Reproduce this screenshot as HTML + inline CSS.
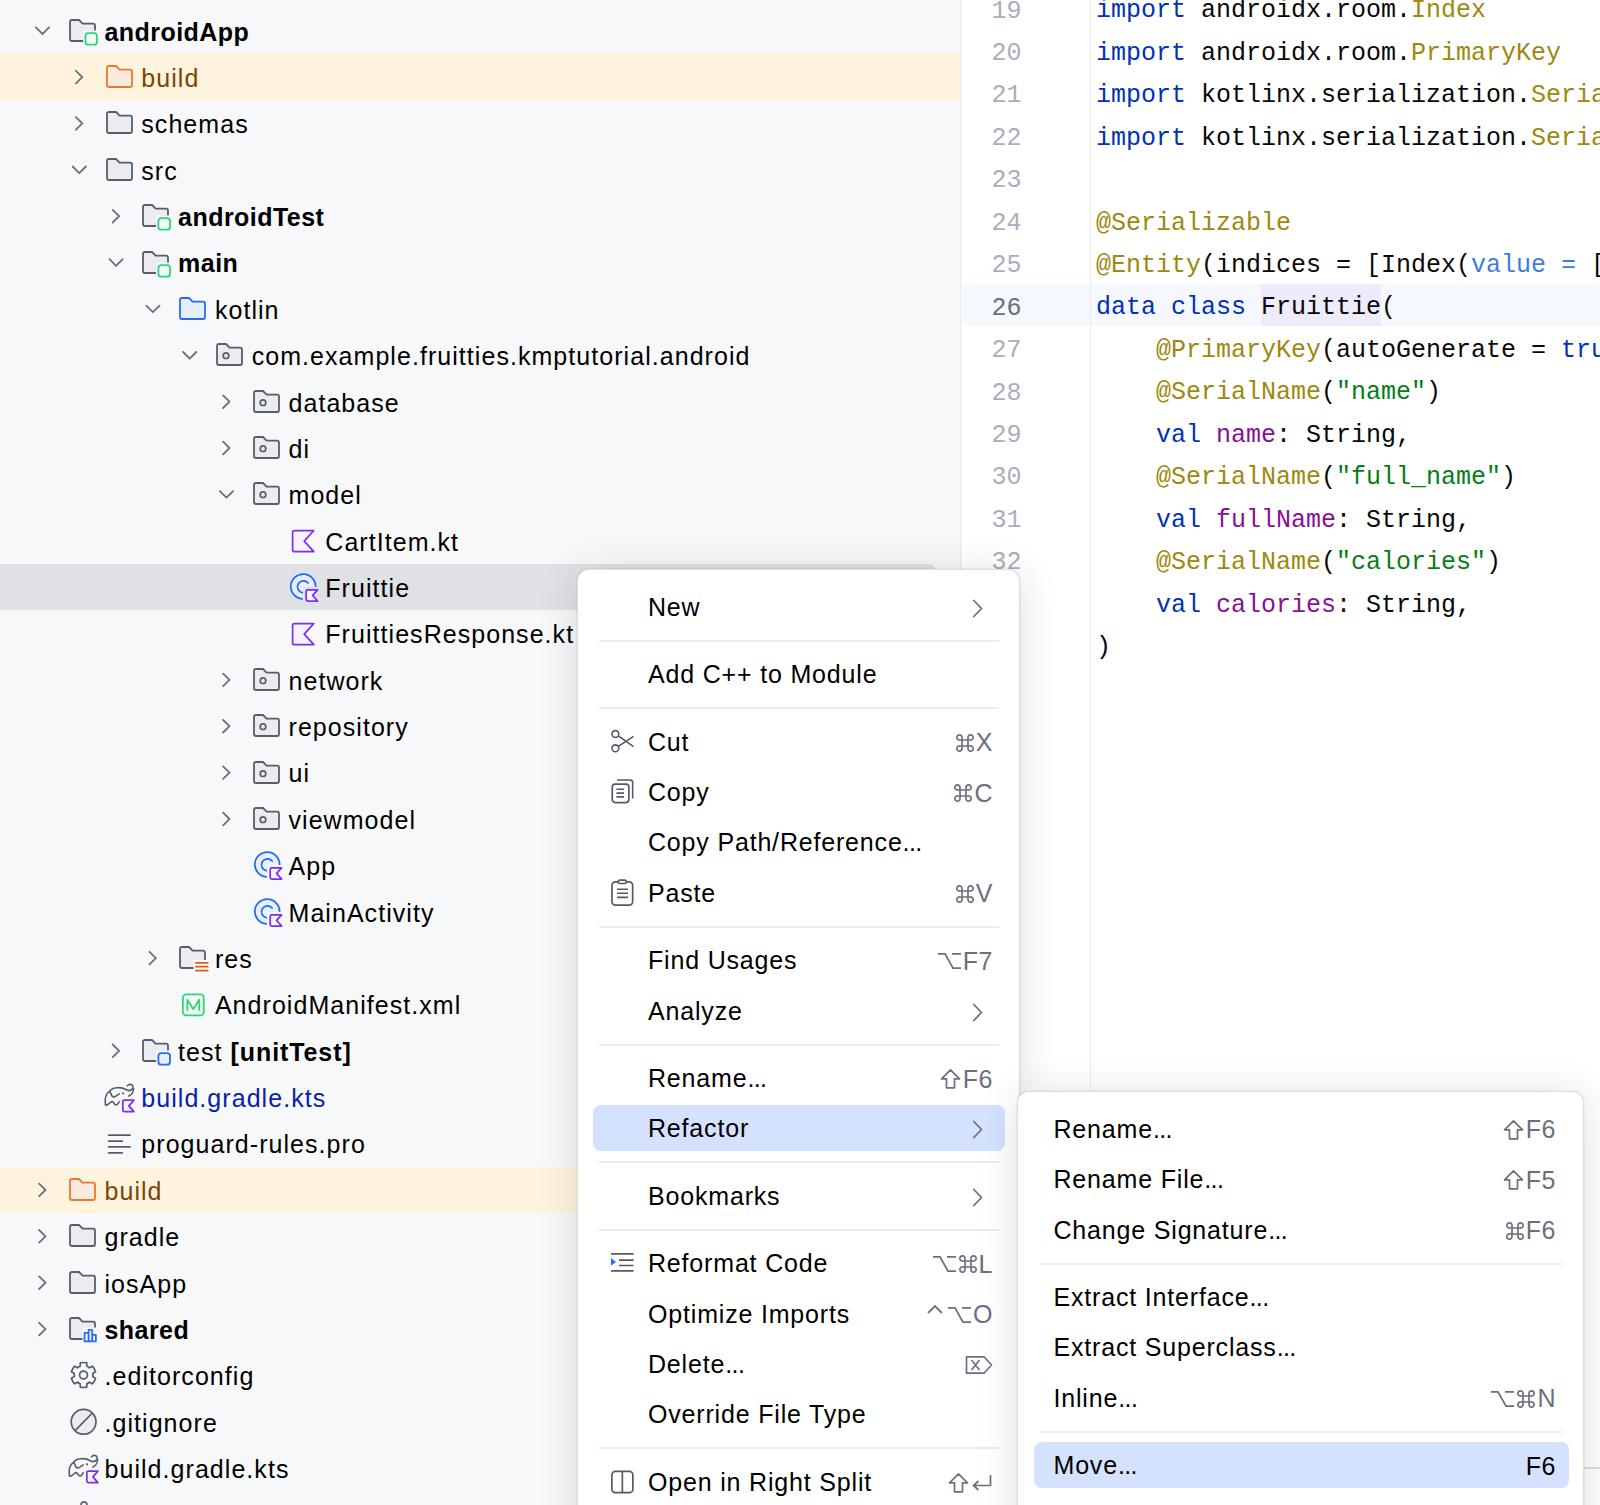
<!DOCTYPE html>
<html><head><meta charset="utf-8"><style>
*{margin:0;padding:0;box-sizing:border-box}
html,body{width:1600px;height:1505px;overflow:hidden;background:#F7F8FA}
body{position:relative;font-family:"Liberation Sans",sans-serif;font-size:25px;color:#000}
.ic{position:absolute;overflow:visible}
.rowbg{position:absolute;left:0;width:961px}
.sel{background:#DFE1E5;width:936px;border-radius:0 8px 8px 0}
.t{position:absolute;height:46.4px;line-height:46.4px;white-space:pre;letter-spacing:1.05px;margin-top:1px}
.t b{font-weight:bold;letter-spacing:0.9px}
.b{font-weight:bold;letter-spacing:0.45px}
.ex{color:#7F4305}
.bl{color:#0B22A6}
#tree{position:absolute;left:0;top:0;width:961px;height:1505px;background:#F7F8FA;border-right:1px solid #EBECF0;overflow:hidden}
#editor{position:absolute;left:962px;top:0;width:638px;height:1505px;background:#FFF;overflow:hidden}
.gsep{position:absolute;left:128px;top:0;width:1px;height:1505px;background:#EBECF0}
.curline{position:absolute;left:0;width:638px;background:#F5F8FE}
.ln{position:absolute;left:0;width:59.5px;margin-top:2.8px;text-align:right;font-family:"Liberation Mono",monospace;font-size:25px;height:42.5px;line-height:42.5px;color:#A9AEBD}
.ln.cur{color:#6A6E7D}
.code{position:absolute;left:134px;margin-top:2.5px;font-family:"Liberation Mono",monospace;font-size:25px;height:42.5px;line-height:42.5px;white-space:pre;color:#080808}
.hl{position:absolute;background:#EDEBFC}
.menu{position:absolute;background:#FFF;border:1px solid rgba(0,0,0,0.13);border-radius:12px;box-shadow:0 0 2px rgba(0,0,0,0.12),0 4px 40px rgba(0,0,0,0.13)}
.sep{position:absolute;height:2px;background:#EBECF0}
.dots{letter-spacing:-0.6px}
.msel{position:absolute;background:#D4E2FF;border-radius:8px}
.mt{position:absolute;white-space:pre;letter-spacing:0.82px}
.msc{position:absolute;display:flex;align-items:center;white-space:pre;letter-spacing:0.5px;padding-top:2px}
.msc svg{display:block}
</style></head>
<body>
<div id="tree">
<svg class="ic" style="left:66.7px;top:14.7px" width="32" height="32" viewBox="0 0 32 32"><defs><mask id="mk1" maskUnits="userSpaceOnUse" x="-4" y="-4" width="40" height="40"><rect x="-4" y="-4" width="40" height="40" fill="#fff"/><rect x="16" y="15.5" width="16" height="16" fill="#000"/></mask></defs><g mask="url(#mk1)"><path d="M3,24 V7 Q3,5 5,5 H12 L15.6,8.6 H26 Q28,8.6 28,10.6 V24 Q28,26 26,26 H5 Q3,26 3,24 Z" fill="#EBECF0" stroke="#585D6B" stroke-width="1.8" stroke-linejoin="round"/></g><rect x="18.4" y="18.1" width="11.6" height="11.6" rx="3" fill="#F2FCF3" stroke="#2ED47A" stroke-width="1.8"/></svg>
<div class="t b" style="left:104.5px;top:7.5px">androidApp</div>
<div class="rowbg" style="top:53.9px;height:46.4px;background:#FEF4DE"></div>
<svg class="ic" style="left:103.5px;top:61.1px" width="32" height="32" viewBox="0 0 32 32"><path d="M3,24 V7 Q3,5 5,5 H12 L15.6,8.6 H26 Q28,8.6 28,10.6 V24 Q28,26 26,26 H5 Q3,26 3,24 Z" fill="#FBEADF" stroke="#E8792A" stroke-width="1.8" stroke-linejoin="round"/></svg>
<div class="t ex" style="left:141.3px;top:53.9px">build</div>
<svg class="ic" style="left:103.5px;top:107.4px" width="32" height="32" viewBox="0 0 32 32"><path d="M3,24 V7 Q3,5 5,5 H12 L15.6,8.6 H26 Q28,8.6 28,10.6 V24 Q28,26 26,26 H5 Q3,26 3,24 Z" fill="#EBECF0" stroke="#585D6B" stroke-width="1.8" stroke-linejoin="round"/></svg>
<div class="t" style="left:141.3px;top:100.3px">schemas</div>
<svg class="ic" style="left:103.5px;top:153.8px" width="32" height="32" viewBox="0 0 32 32"><path d="M3,24 V7 Q3,5 5,5 H12 L15.6,8.6 H26 Q28,8.6 28,10.6 V24 Q28,26 26,26 H5 Q3,26 3,24 Z" fill="#EBECF0" stroke="#585D6B" stroke-width="1.8" stroke-linejoin="round"/></svg>
<div class="t" style="left:141.3px;top:146.6px">src</div>
<svg class="ic" style="left:140.3px;top:200.2px" width="32" height="32" viewBox="0 0 32 32"><defs><mask id="mk2" maskUnits="userSpaceOnUse" x="-4" y="-4" width="40" height="40"><rect x="-4" y="-4" width="40" height="40" fill="#fff"/><rect x="16" y="15.5" width="16" height="16" fill="#000"/></mask></defs><g mask="url(#mk2)"><path d="M3,24 V7 Q3,5 5,5 H12 L15.6,8.6 H26 Q28,8.6 28,10.6 V24 Q28,26 26,26 H5 Q3,26 3,24 Z" fill="#EBECF0" stroke="#585D6B" stroke-width="1.8" stroke-linejoin="round"/></g><rect x="18.4" y="18.1" width="11.6" height="11.6" rx="3" fill="#F2FCF3" stroke="#2ED47A" stroke-width="1.8"/></svg>
<div class="t b" style="left:178.1px;top:193.0px">androidTest</div>
<svg class="ic" style="left:140.3px;top:246.6px" width="32" height="32" viewBox="0 0 32 32"><defs><mask id="mk3" maskUnits="userSpaceOnUse" x="-4" y="-4" width="40" height="40"><rect x="-4" y="-4" width="40" height="40" fill="#fff"/><rect x="16" y="15.5" width="16" height="16" fill="#000"/></mask></defs><g mask="url(#mk3)"><path d="M3,24 V7 Q3,5 5,5 H12 L15.6,8.6 H26 Q28,8.6 28,10.6 V24 Q28,26 26,26 H5 Q3,26 3,24 Z" fill="#EBECF0" stroke="#585D6B" stroke-width="1.8" stroke-linejoin="round"/></g><rect x="18.4" y="18.1" width="11.6" height="11.6" rx="3" fill="#F2FCF3" stroke="#2ED47A" stroke-width="1.8"/></svg>
<div class="t b" style="left:178.1px;top:239.4px">main</div>
<svg class="ic" style="left:177.1px;top:292.9px" width="32" height="32" viewBox="0 0 32 32"><path d="M3,24 V7 Q3,5 5,5 H12 L15.6,8.6 H26 Q28,8.6 28,10.6 V24 Q28,26 26,26 H5 Q3,26 3,24 Z" fill="#E7EFFD" stroke="#2A6CF0" stroke-width="1.8" stroke-linejoin="round"/></svg>
<div class="t" style="left:214.9px;top:285.7px">kotlin</div>
<svg class="ic" style="left:213.9px;top:339.3px" width="32" height="32" viewBox="0 0 32 32"><path d="M3,24 V7 Q3,5 5,5 H12 L15.6,8.6 H26 Q28,8.6 28,10.6 V24 Q28,26 26,26 H5 Q3,26 3,24 Z" fill="#EBECF0" stroke="#585D6B" stroke-width="1.8" stroke-linejoin="round"/><circle cx="12.0" cy="16.7" r="2.8" fill="none" stroke="#585D6B" stroke-width="1.7"/></svg>
<div class="t" style="left:251.7px;top:332.1px">com.example.fruitties.kmptutorial.android</div>
<svg class="ic" style="left:250.7px;top:385.7px" width="32" height="32" viewBox="0 0 32 32"><path d="M3,24 V7 Q3,5 5,5 H12 L15.6,8.6 H26 Q28,8.6 28,10.6 V24 Q28,26 26,26 H5 Q3,26 3,24 Z" fill="#EBECF0" stroke="#585D6B" stroke-width="1.8" stroke-linejoin="round"/><circle cx="12.0" cy="16.7" r="2.8" fill="none" stroke="#585D6B" stroke-width="1.7"/></svg>
<div class="t" style="left:288.5px;top:378.5px">database</div>
<svg class="ic" style="left:250.7px;top:432.0px" width="32" height="32" viewBox="0 0 32 32"><path d="M3,24 V7 Q3,5 5,5 H12 L15.6,8.6 H26 Q28,8.6 28,10.6 V24 Q28,26 26,26 H5 Q3,26 3,24 Z" fill="#EBECF0" stroke="#585D6B" stroke-width="1.8" stroke-linejoin="round"/><circle cx="12.0" cy="16.7" r="2.8" fill="none" stroke="#585D6B" stroke-width="1.7"/></svg>
<div class="t" style="left:288.5px;top:424.8px">di</div>
<svg class="ic" style="left:250.7px;top:478.4px" width="32" height="32" viewBox="0 0 32 32"><path d="M3,24 V7 Q3,5 5,5 H12 L15.6,8.6 H26 Q28,8.6 28,10.6 V24 Q28,26 26,26 H5 Q3,26 3,24 Z" fill="#EBECF0" stroke="#585D6B" stroke-width="1.8" stroke-linejoin="round"/><circle cx="12.0" cy="16.7" r="2.8" fill="none" stroke="#585D6B" stroke-width="1.7"/></svg>
<div class="t" style="left:288.5px;top:471.2px">model</div>
<svg class="ic" style="left:288.3px;top:524.8px" width="32" height="32" viewBox="0 0 32 32"><path d="M6.6,5.55 H25.85 L16.2,16.1 L25.85,26.65 H6.6 Q4.6,26.65 4.6,24.65 V7.55 Q4.6,5.55 6.6,5.55 Z" fill="#F7F2FF" stroke="#7B30EE" stroke-width="1.7" stroke-linejoin="round"/></svg>
<div class="t" style="left:325.3px;top:517.6px">CartItem.kt</div>
<div class="rowbg sel" style="top:564.0px;height:46.4px"></div>
<svg class="ic" style="left:288.3px;top:571.1px" width="32" height="32" viewBox="0 0 32 32"><defs><mask id="mk4" maskUnits="userSpaceOnUse" x="-4" y="-4" width="40" height="40"><rect x="-4" y="-4" width="40" height="40" fill="#fff"/><rect x="15.5" y="16" width="17" height="16" fill="#000"/></mask></defs><g mask="url(#mk4)"><circle cx="15.2" cy="15.6" r="12.4" fill="#E7EFFD" stroke="none"/><path d="M27.6,15.6 A12.4,12.4 0 1 0 14.2,27.9" fill="none" stroke="#2A6CF0" stroke-width="1.8" stroke-linecap="round"/><path d="M20.1,12.0 A6,6 0 1 0 14.2,21.7" fill="none" stroke="#2A6CF0" stroke-width="1.8" stroke-linecap="round"/></g><path d="M19.7,18.9 H29.6 L24.6,24.4 L29.6,30 H19.7 Q18.2,30 18.2,28.5 V20.4 Q18.2,18.9 19.7,18.9 Z" fill="#F8F3FF" stroke="#7B30EE" stroke-width="1.75" stroke-linejoin="round"/></svg>
<div class="t" style="left:325.3px;top:564.0px">Fruittie</div>
<svg class="ic" style="left:288.3px;top:617.5px" width="32" height="32" viewBox="0 0 32 32"><path d="M6.6,5.55 H25.85 L16.2,16.1 L25.85,26.65 H6.6 Q4.6,26.65 4.6,24.65 V7.55 Q4.6,5.55 6.6,5.55 Z" fill="#F7F2FF" stroke="#7B30EE" stroke-width="1.7" stroke-linejoin="round"/></svg>
<div class="t" style="left:325.3px;top:610.3px">FruittiesResponse.kt</div>
<svg class="ic" style="left:250.7px;top:663.9px" width="32" height="32" viewBox="0 0 32 32"><path d="M3,24 V7 Q3,5 5,5 H12 L15.6,8.6 H26 Q28,8.6 28,10.6 V24 Q28,26 26,26 H5 Q3,26 3,24 Z" fill="#EBECF0" stroke="#585D6B" stroke-width="1.8" stroke-linejoin="round"/><circle cx="12.0" cy="16.7" r="2.8" fill="none" stroke="#585D6B" stroke-width="1.7"/></svg>
<div class="t" style="left:288.5px;top:656.7px">network</div>
<svg class="ic" style="left:250.7px;top:710.2px" width="32" height="32" viewBox="0 0 32 32"><path d="M3,24 V7 Q3,5 5,5 H12 L15.6,8.6 H26 Q28,8.6 28,10.6 V24 Q28,26 26,26 H5 Q3,26 3,24 Z" fill="#EBECF0" stroke="#585D6B" stroke-width="1.8" stroke-linejoin="round"/><circle cx="12.0" cy="16.7" r="2.8" fill="none" stroke="#585D6B" stroke-width="1.7"/></svg>
<div class="t" style="left:288.5px;top:703.1px">repository</div>
<svg class="ic" style="left:250.7px;top:756.6px" width="32" height="32" viewBox="0 0 32 32"><path d="M3,24 V7 Q3,5 5,5 H12 L15.6,8.6 H26 Q28,8.6 28,10.6 V24 Q28,26 26,26 H5 Q3,26 3,24 Z" fill="#EBECF0" stroke="#585D6B" stroke-width="1.8" stroke-linejoin="round"/><circle cx="12.0" cy="16.7" r="2.8" fill="none" stroke="#585D6B" stroke-width="1.7"/></svg>
<div class="t" style="left:288.5px;top:749.4px">ui</div>
<svg class="ic" style="left:250.7px;top:803.0px" width="32" height="32" viewBox="0 0 32 32"><path d="M3,24 V7 Q3,5 5,5 H12 L15.6,8.6 H26 Q28,8.6 28,10.6 V24 Q28,26 26,26 H5 Q3,26 3,24 Z" fill="#EBECF0" stroke="#585D6B" stroke-width="1.8" stroke-linejoin="round"/><circle cx="12.0" cy="16.7" r="2.8" fill="none" stroke="#585D6B" stroke-width="1.7"/></svg>
<div class="t" style="left:288.5px;top:795.8px">viewmodel</div>
<svg class="ic" style="left:251.5px;top:849.4px" width="32" height="32" viewBox="0 0 32 32"><defs><mask id="mk5" maskUnits="userSpaceOnUse" x="-4" y="-4" width="40" height="40"><rect x="-4" y="-4" width="40" height="40" fill="#fff"/><rect x="15.5" y="16" width="17" height="16" fill="#000"/></mask></defs><g mask="url(#mk5)"><circle cx="15.2" cy="15.6" r="12.4" fill="#E7EFFD" stroke="none"/><path d="M27.6,15.6 A12.4,12.4 0 1 0 14.2,27.9" fill="none" stroke="#2A6CF0" stroke-width="1.8" stroke-linecap="round"/><path d="M20.1,12.0 A6,6 0 1 0 14.2,21.7" fill="none" stroke="#2A6CF0" stroke-width="1.8" stroke-linecap="round"/></g><path d="M19.7,18.9 H29.6 L24.6,24.4 L29.6,30 H19.7 Q18.2,30 18.2,28.5 V20.4 Q18.2,18.9 19.7,18.9 Z" fill="#F8F3FF" stroke="#7B30EE" stroke-width="1.75" stroke-linejoin="round"/></svg>
<div class="t" style="left:288.5px;top:842.2px">App</div>
<svg class="ic" style="left:251.5px;top:895.7px" width="32" height="32" viewBox="0 0 32 32"><defs><mask id="mk6" maskUnits="userSpaceOnUse" x="-4" y="-4" width="40" height="40"><rect x="-4" y="-4" width="40" height="40" fill="#fff"/><rect x="15.5" y="16" width="17" height="16" fill="#000"/></mask></defs><g mask="url(#mk6)"><circle cx="15.2" cy="15.6" r="12.4" fill="#E7EFFD" stroke="none"/><path d="M27.6,15.6 A12.4,12.4 0 1 0 14.2,27.9" fill="none" stroke="#2A6CF0" stroke-width="1.8" stroke-linecap="round"/><path d="M20.1,12.0 A6,6 0 1 0 14.2,21.7" fill="none" stroke="#2A6CF0" stroke-width="1.8" stroke-linecap="round"/></g><path d="M19.7,18.9 H29.6 L24.6,24.4 L29.6,30 H19.7 Q18.2,30 18.2,28.5 V20.4 Q18.2,18.9 19.7,18.9 Z" fill="#F8F3FF" stroke="#7B30EE" stroke-width="1.75" stroke-linejoin="round"/></svg>
<div class="t" style="left:288.5px;top:888.5px">MainActivity</div>
<svg class="ic" style="left:177.1px;top:942.1px" width="32" height="32" viewBox="0 0 32 32"><defs><mask id="mk7" maskUnits="userSpaceOnUse" x="-4" y="-4" width="40" height="40"><rect x="-4" y="-4" width="40" height="40" fill="#fff"/><rect x="16.5" y="18" width="16" height="14" fill="#000"/></mask></defs><g mask="url(#mk7)"><path d="M3,24 V7 Q3,5 5,5 H12 L15.6,8.6 H26 Q28,8.6 28,10.6 V24 Q28,26 26,26 H5 Q3,26 3,24 Z" fill="#EBECF0" stroke="#585D6B" stroke-width="1.8" stroke-linejoin="round"/></g><path d="M18.85,20.8 H30.75 M18.85,24.7 H30.75 M18.85,28.7 H30.75" stroke="#E05A16" stroke-width="1.7" stroke-linecap="round" fill="none"/></svg>
<div class="t" style="left:214.9px;top:934.9px">res</div>
<svg class="ic" style="left:177.9px;top:988.5px" width="32" height="32" viewBox="0 0 32 32"><rect x="4.85" y="5.45" width="20.9" height="20.9" rx="3.5" fill="#F2FCF3" stroke="#2ED47A" stroke-width="1.8"/><path d="M9.35,21.8 V10.6 L15.3,20.2 L21.2,10.6 V21.8" fill="none" stroke="#2ED47A" stroke-width="1.7" stroke-linejoin="round"/></svg>
<div class="t" style="left:214.9px;top:981.3px">AndroidManifest.xml</div>
<svg class="ic" style="left:140.3px;top:1034.8px" width="32" height="32" viewBox="0 0 32 32"><defs><mask id="mk8" maskUnits="userSpaceOnUse" x="-4" y="-4" width="40" height="40"><rect x="-4" y="-4" width="40" height="40" fill="#fff"/><rect x="16" y="15.5" width="16" height="16" fill="#000"/></mask></defs><g mask="url(#mk8)"><path d="M3,24 V7 Q3,5 5,5 H12 L15.6,8.6 H26 Q28,8.6 28,10.6 V24 Q28,26 26,26 H5 Q3,26 3,24 Z" fill="#EBECF0" stroke="#585D6B" stroke-width="1.8" stroke-linejoin="round"/></g><rect x="18.4" y="18.1" width="11.6" height="11.6" rx="3" fill="#E7EFFD" stroke="#2A6CF0" stroke-width="1.8"/></svg>
<div class="t" style="left:178.1px;top:1027.7px">test <b>[unitTest]</b></div>
<svg class="ic" style="left:104.3px;top:1081.2px" width="32" height="32" viewBox="0 0 32 32"><defs><mask id="mk9" maskUnits="userSpaceOnUse" x="-4" y="-4" width="40" height="40"><rect x="-4" y="-4" width="40" height="40" fill="#fff"/><rect x="16.5" y="17" width="16" height="15" fill="#000"/></mask></defs><g mask="url(#mk9)"><path d="M6.0,9.9 C8.6,5.8 17.6,5.8 22.4,8.8 C26.6,11.1 29.6,7.6 29.0,5.2 C28.4,2.8 24.8,2.8 23.3,4.9 M29.6,7.6 C29.6,11.1 27.2,14.1 24.8,15.0 M6.0,9.9 C1.5,12.9 0.6,18.9 1.5,24.0 C3.9,24.9 5.1,21.9 7.5,20.7 C9.8,20.1 10.4,24.3 12.2,24.0 C14.0,23.7 14.6,21.9 15.2,20.7 M6.0,9.9 C6.9,13.5 8.1,16.5 10.4,15.9 C12.2,15.3 13.4,14.1 15.2,12.9" fill="none" stroke="#585D6B" stroke-width="1.6" stroke-linecap="round" stroke-linejoin="round"/><circle cx="19.1" cy="12.3" r="1.1" fill="#585D6B"/></g><path d="M20.3,19.2 H29.9 L24.9,24.9 L29.9,30.6 H20.3 Q18.8,30.6 18.8,29.1 V20.7 Q18.8,19.2 20.3,19.2 Z" fill="#F8F3FF" stroke="#7B30EE" stroke-width="1.75" stroke-linejoin="round"/></svg>
<div class="t bl" style="left:141.3px;top:1074.0px">build.gradle.kts</div>
<svg class="ic" style="left:104.3px;top:1127.6px" width="32" height="32" viewBox="0 0 32 32"><path d="M4.75,7.2 H26.05 M4.75,13.2 H18.25 M4.75,18.9 H26.05 M4.75,24.9 H18.25" stroke="#585D6B" stroke-width="1.7" stroke-linecap="round" fill="none"/></svg>
<div class="t" style="left:141.3px;top:1120.4px">proguard-rules.pro</div>
<div class="rowbg" style="top:1166.8px;height:46.4px;background:#FEF4DE"></div>
<svg class="ic" style="left:66.7px;top:1174.0px" width="32" height="32" viewBox="0 0 32 32"><path d="M3,24 V7 Q3,5 5,5 H12 L15.6,8.6 H26 Q28,8.6 28,10.6 V24 Q28,26 26,26 H5 Q3,26 3,24 Z" fill="#FBEADF" stroke="#E8792A" stroke-width="1.8" stroke-linejoin="round"/></svg>
<div class="t ex" style="left:104.5px;top:1166.8px">build</div>
<svg class="ic" style="left:66.7px;top:1220.3px" width="32" height="32" viewBox="0 0 32 32"><path d="M3,24 V7 Q3,5 5,5 H12 L15.6,8.6 H26 Q28,8.6 28,10.6 V24 Q28,26 26,26 H5 Q3,26 3,24 Z" fill="#EBECF0" stroke="#585D6B" stroke-width="1.8" stroke-linejoin="round"/></svg>
<div class="t" style="left:104.5px;top:1213.1px">gradle</div>
<svg class="ic" style="left:66.7px;top:1266.7px" width="32" height="32" viewBox="0 0 32 32"><path d="M3,24 V7 Q3,5 5,5 H12 L15.6,8.6 H26 Q28,8.6 28,10.6 V24 Q28,26 26,26 H5 Q3,26 3,24 Z" fill="#EBECF0" stroke="#585D6B" stroke-width="1.8" stroke-linejoin="round"/></svg>
<div class="t" style="left:104.5px;top:1259.5px">iosApp</div>
<svg class="ic" style="left:66.7px;top:1313.1px" width="32" height="32" viewBox="0 0 32 32"><defs><mask id="mk10" maskUnits="userSpaceOnUse" x="-4" y="-4" width="40" height="40"><rect x="-4" y="-4" width="40" height="40" fill="#fff"/><rect x="15.5" y="14.5" width="17" height="17.5" fill="#000"/></mask></defs><g mask="url(#mk10)"><path d="M3,24 V7 Q3,5 5,5 H12 L15.6,8.6 H26 Q28,8.6 28,10.6 V24 Q28,26 26,26 H5 Q3,26 3,24 Z" fill="#EBECF0" stroke="#585D6B" stroke-width="1.8" stroke-linejoin="round"/></g><path d="M17.5,28.3 V19.8 H21.6 V16.8 H25.2 V21.8 H28.9 V28.3 Z" fill="#E7EFFD" stroke="#2A6CF0" stroke-width="1.7" stroke-linejoin="round"/><path d="M21.6,19.8 V28.3 M25.2,21.8 V28.3" fill="none" stroke="#2A6CF0" stroke-width="1.7"/></svg>
<div class="t b" style="left:104.5px;top:1305.9px">shared</div>
<svg class="ic" style="left:67.5px;top:1359.4px" width="32" height="32" viewBox="0 0 32 32"><path d="M12.26,3.93 A12.5,12.5 0 0 1 18.74,3.93 L18.83,7.32 A9.3,9.3 0 0 1 21.35,8.77 L24.34,7.16 A12.5,12.5 0 0 1 27.57,12.76 L24.69,14.55 A9.3,9.3 0 0 1 24.69,17.45 L27.57,19.24 A12.5,12.5 0 0 1 24.34,24.84 L21.35,23.23 A9.3,9.3 0 0 1 18.83,24.68 L18.74,28.07 A12.5,12.5 0 0 1 12.26,28.07 L12.17,24.68 A9.3,9.3 0 0 1 9.65,23.23 L6.66,24.84 A12.5,12.5 0 0 1 3.43,19.24 L6.31,17.45 A9.3,9.3 0 0 1 6.31,14.55 L3.43,12.76 A12.5,12.5 0 0 1 6.66,7.16 L9.65,8.77 A9.3,9.3 0 0 1 12.17,7.32 Z" fill="none" stroke="#585D6B" stroke-width="1.7" stroke-linejoin="round"/><circle cx="15.5" cy="16" r="3.95" fill="none" stroke="#585D6B" stroke-width="1.7"/></svg>
<div class="t" style="left:104.5px;top:1352.2px">.editorconfig</div>
<svg class="ic" style="left:67.5px;top:1405.8px" width="32" height="32" viewBox="0 0 32 32"><circle cx="15.6" cy="15.8" r="12.4" fill="#EBECF0" stroke="#585D6B" stroke-width="1.7"/><path d="M7.1,24.6 L24.4,7.0" stroke="#585D6B" stroke-width="1.7"/></svg>
<div class="t" style="left:104.5px;top:1398.6px">.gitignore</div>
<svg class="ic" style="left:67.5px;top:1452.2px" width="32" height="32" viewBox="0 0 32 32"><defs><mask id="mk11" maskUnits="userSpaceOnUse" x="-4" y="-4" width="40" height="40"><rect x="-4" y="-4" width="40" height="40" fill="#fff"/><rect x="16.5" y="17" width="16" height="15" fill="#000"/></mask></defs><g mask="url(#mk11)"><path d="M6.0,9.9 C8.6,5.8 17.6,5.8 22.4,8.8 C26.6,11.1 29.6,7.6 29.0,5.2 C28.4,2.8 24.8,2.8 23.3,4.9 M29.6,7.6 C29.6,11.1 27.2,14.1 24.8,15.0 M6.0,9.9 C1.5,12.9 0.6,18.9 1.5,24.0 C3.9,24.9 5.1,21.9 7.5,20.7 C9.8,20.1 10.4,24.3 12.2,24.0 C14.0,23.7 14.6,21.9 15.2,20.7 M6.0,9.9 C6.9,13.5 8.1,16.5 10.4,15.9 C12.2,15.3 13.4,14.1 15.2,12.9" fill="none" stroke="#585D6B" stroke-width="1.6" stroke-linecap="round" stroke-linejoin="round"/><circle cx="19.1" cy="12.3" r="1.1" fill="#585D6B"/></g><path d="M20.3,19.2 H29.9 L24.9,24.9 L29.9,30.6 H20.3 Q18.8,30.6 18.8,29.1 V20.7 Q18.8,19.2 20.3,19.2 Z" fill="#F8F3FF" stroke="#7B30EE" stroke-width="1.75" stroke-linejoin="round"/></svg>
<div class="t" style="left:104.5px;top:1445.0px">build.gradle.kts</div>
<svg class="ic" style="left:0;top:0" width="960" height="1505"><path d="M35.9,27.4 L42.5,34.0 L49.1,27.4 M75.9,70.8 L82.3,77.1 L75.9,83.4 M75.9,117.1 L82.3,123.4 L75.9,129.7 M72.7,166.5 L79.3,173.1 L85.9,166.5 M112.7,209.9 L119.1,216.2 L112.7,222.5 M109.5,259.2 L116.1,265.9 L122.7,259.2 M146.3,305.6 L152.9,312.2 L159.5,305.6 M183.1,352.0 L189.7,358.6 L196.3,352.0 M223.1,395.4 L229.5,401.7 L223.1,408.0 M223.1,441.7 L229.5,448.0 L223.1,454.3 M219.9,491.1 L226.5,497.7 L233.1,491.1 M223.1,673.6 L229.5,679.9 L223.1,686.2 M223.1,720.0 L229.5,726.2 L223.1,732.5 M223.1,766.3 L229.5,772.6 L223.1,778.9 M223.1,812.7 L229.5,819.0 L223.1,825.3 M149.5,951.8 L155.9,958.1 L149.5,964.4 M112.7,1044.5 L119.1,1050.8 L112.7,1057.1 M39.1,1183.7 L45.5,1190.0 L39.1,1196.2 M39.1,1230.0 L45.5,1236.3 L39.1,1242.6 M39.1,1276.4 L45.5,1282.7 L39.1,1289.0 M39.1,1322.8 L45.5,1329.1 L39.1,1335.4" fill="none" stroke="#6C707E" stroke-width="1.8" stroke-linecap="round" stroke-linejoin="round"/></svg>
<svg class="ic" style="left:67.5px;top:1498.5px" width="32" height="32"><circle cx="16" cy="6" r="3" fill="none" stroke="#6C707E" stroke-width="1.8"/></svg>
</div>
<div id="editor">
<div class="curline" style="top:284.2px;height:42.2px"></div>
<div class="hl" style="left:299px;width:120px;top:284.2px;height:42.2px"></div>
<div class="ln" style="top:-12.2px">19</div>
<div class="code" style="top:-12.2px"><span style="color:#0033B3">import</span> androidx.room.<span style="color:#9E880D">Index</span></div>
<div class="ln" style="top:30.2px">20</div>
<div class="code" style="top:30.2px"><span style="color:#0033B3">import</span> androidx.room.<span style="color:#9E880D">PrimaryKey</span></div>
<div class="ln" style="top:72.7px">21</div>
<div class="code" style="top:72.7px"><span style="color:#0033B3">import</span> kotlinx.serialization.<span style="color:#9E880D">SerialName</span></div>
<div class="ln" style="top:115.1px">22</div>
<div class="code" style="top:115.1px"><span style="color:#0033B3">import</span> kotlinx.serialization.<span style="color:#9E880D">Serializable</span></div>
<div class="ln" style="top:157.6px">23</div>
<div class="code" style="top:157.6px"></div>
<div class="ln" style="top:200.0px">24</div>
<div class="code" style="top:200.0px"><span style="color:#9E880D">@Serializable</span></div>
<div class="ln" style="top:242.5px">25</div>
<div class="code" style="top:242.5px"><span style="color:#9E880D">@Entity</span>(indices = [Index(<span style="color:#3F7DDA">value =</span> [</div>
<div class="ln cur" style="top:284.9px">26</div>
<div class="code" style="top:284.9px"><span style="color:#0033B3">data class</span> Fruittie(</div>
<div class="ln" style="top:327.4px">27</div>
<div class="code" style="top:327.4px">    <span style="color:#9E880D">@PrimaryKey</span>(autoGenerate = <span style="color:#0033B3">true</span>)</div>
<div class="ln" style="top:369.8px">28</div>
<div class="code" style="top:369.8px">    <span style="color:#9E880D">@SerialName</span>(<span style="color:#067D17">"name"</span>)</div>
<div class="ln" style="top:412.3px">29</div>
<div class="code" style="top:412.3px">    <span style="color:#0033B3">val</span> <span style="color:#871094">name</span>: String,</div>
<div class="ln" style="top:454.7px">30</div>
<div class="code" style="top:454.7px">    <span style="color:#9E880D">@SerialName</span>(<span style="color:#067D17">"full_name"</span>)</div>
<div class="ln" style="top:497.2px">31</div>
<div class="code" style="top:497.2px">    <span style="color:#0033B3">val</span> <span style="color:#871094">fullName</span>: String,</div>
<div class="ln" style="top:539.6px">32</div>
<div class="code" style="top:539.6px">    <span style="color:#9E880D">@SerialName</span>(<span style="color:#067D17">"calories"</span>)</div>
<div class="ln" style="top:582.1px">33</div>
<div class="code" style="top:582.1px">    <span style="color:#0033B3">val</span> <span style="color:#871094">calories</span>: String,</div>
<div class="code" style="top:624.5px">)</div>
<div class="gsep"></div>
<div style="position:absolute;left:622px;top:1466.5px;width:16px;height:2px;background:#DADBDE"></div>
</div>
<div class="menu" style="left:577px;top:569px;width:443px;height:1000px"></div>
<div class="mt" style="left:648.0px;top:581.8px;height:50.4px;line-height:50.4px">New</div>
<svg class="ic" style="left:972.2px;top:598.8px" width="12" height="20" viewBox="0 0 12 20"><path d="M1.8,1.5 L9.5,9.5 L1.8,17.5" fill="none" stroke="#6C707E" stroke-width="1.8" stroke-linecap="round" stroke-linejoin="round"/></svg>
<div class="sep" style="left:599.0px;width:400.0px;top:639.7px"></div>
<div class="mt" style="left:648.0px;top:649.2px;height:50.4px;line-height:50.4px">Add C++ to Module</div>
<div class="sep" style="left:599.0px;width:400.0px;top:707.1px"></div>
<div class="mt" style="left:648.0px;top:716.6px;height:50.4px;line-height:50.4px">Cut</div>
<div class="msc" style="right:607.0px;top:716.6px;height:50.4px;color:#6C707E"><svg width="20" height="20" viewBox="0 0 20 20" style="margin-right:1px"><path d="M7,7 H13 V13 H7 Z M7,7 V4.8 A2.6,2.6 0 1 0 4.8,7 H7 M13,7 V4.8 A2.6,2.6 0 1 1 15.2,7 H13 M7,13 V15.2 A2.6,2.6 0 1 1 4.8,13 H7 M13,13 V15.2 A2.6,2.6 0 1 0 15.2,13 H13" fill="none" stroke="#6C707E" stroke-width="1.7"/></svg><span>X</span></div>
<svg class="ic" style="left:609.0px;top:728.9px" width="26" height="25" viewBox="0 0 26 25"><circle cx="6.4" cy="5.0" r="3.4" fill="none" stroke="#555A69" stroke-width="1.6"/><circle cx="6.4" cy="19.3" r="3.4" fill="none" stroke="#555A69" stroke-width="1.6"/><path d="M9.3,6.9 L24.5,17.7 M9.3,17.4 L24.5,7.3" fill="none" stroke="#555A69" stroke-width="1.6"/></svg>
<div class="mt" style="left:648.0px;top:767.0px;height:50.4px;line-height:50.4px">Copy</div>
<div class="msc" style="right:607.0px;top:767.0px;height:50.4px;color:#6C707E"><svg width="20" height="20" viewBox="0 0 20 20" style="margin-right:1px"><path d="M7,7 H13 V13 H7 Z M7,7 V4.8 A2.6,2.6 0 1 0 4.8,7 H7 M13,7 V4.8 A2.6,2.6 0 1 1 15.2,7 H13 M7,13 V15.2 A2.6,2.6 0 1 1 4.8,13 H7 M13,13 V15.2 A2.6,2.6 0 1 0 15.2,13 H13" fill="none" stroke="#6C707E" stroke-width="1.7"/></svg><span>C</span></div>
<svg class="ic" style="left:609.0px;top:778.7px" width="25" height="27" viewBox="0 0 25 27"><path d="M8,0.95 H21.2 Q23.65,0.95 23.65,3.4 V19.4" fill="none" stroke="#555A69" stroke-width="1.6"/><rect x="3.25" y="5.05" width="16.6" height="18.5" rx="3" fill="#FFF" stroke="#555A69" stroke-width="1.7"/><path d="M7.4,10.3 H15 M7.4,14.1 H15 M7.4,17.9 H15" stroke="#555A69" stroke-width="1.6"/></svg>
<div class="mt" style="left:648.0px;top:817.4px;height:50.4px;line-height:50.4px">Copy Path/Reference<span class="dots">...</span></div>
<div class="mt" style="left:648.0px;top:867.8px;height:50.4px;line-height:50.4px">Paste</div>
<div class="msc" style="right:607.0px;top:867.8px;height:50.4px;color:#6C707E"><svg width="20" height="20" viewBox="0 0 20 20" style="margin-right:1px"><path d="M7,7 H13 V13 H7 Z M7,7 V4.8 A2.6,2.6 0 1 0 4.8,7 H7 M13,7 V4.8 A2.6,2.6 0 1 1 15.2,7 H13 M7,13 V15.2 A2.6,2.6 0 1 1 4.8,13 H7 M13,13 V15.2 A2.6,2.6 0 1 0 15.2,13 H13" fill="none" stroke="#6C707E" stroke-width="1.7"/></svg><span>V</span></div>
<svg class="ic" style="left:609.0px;top:879.0px" width="24" height="28" viewBox="0 0 24 28"><rect x="2.95" y="2.85" width="20.7" height="23.2" rx="3.5" fill="#FFF" stroke="#555A69" stroke-width="1.7"/><rect x="9.2" y="1.1" width="8.1" height="3.4" rx="1.7" fill="#FFF" stroke="#555A69" stroke-width="1.6"/><path d="M8,10.2 H19 M8,14.2 H19 M8,18.4 H19" stroke="#555A69" stroke-width="1.6"/></svg>
<div class="sep" style="left:599.0px;width:400.0px;top:925.7px"></div>
<div class="mt" style="left:648.0px;top:935.2px;height:50.4px;line-height:50.4px">Find Usages</div>
<div class="msc" style="right:607.0px;top:935.2px;height:50.4px;color:#6C707E"><svg width="25" height="20" viewBox="0 0 25 20" style="margin-right:1px"><path d="M1,2.8 H8 L16,17.2 H24 M15,2.8 H24" fill="none" stroke="#6C707E" stroke-width="1.8"/></svg><span>F7</span></div>
<div class="mt" style="left:648.0px;top:985.6px;height:50.4px;line-height:50.4px">Analyze</div>
<svg class="ic" style="left:972.2px;top:1002.6px" width="12" height="20" viewBox="0 0 12 20"><path d="M1.8,1.5 L9.5,9.5 L1.8,17.5" fill="none" stroke="#6C707E" stroke-width="1.8" stroke-linecap="round" stroke-linejoin="round"/></svg>
<div class="sep" style="left:599.0px;width:400.0px;top:1043.5px"></div>
<div class="mt" style="left:648.0px;top:1053.0px;height:50.4px;line-height:50.4px">Rename<span class="dots">...</span></div>
<div class="msc" style="right:607.0px;top:1053.0px;height:50.4px;color:#6C707E"><svg width="21" height="22" viewBox="0 0 21 22" style="margin-right:2px"><path d="M10.5,1.8 L19.5,10.8 H14.5 V19.8 H6.5 V10.8 H1.5 Z" fill="none" stroke="#6C707E" stroke-width="1.7" stroke-linejoin="round"/></svg><span>F6</span></div>
<div class="msel" style="left:593.0px;width:412.0px;top:1104.8px;height:46px"></div>
<div class="mt" style="left:648.0px;top:1103.4px;height:50.4px;line-height:50.4px">Refactor</div>
<svg class="ic" style="left:972.2px;top:1120.4px" width="12" height="20" viewBox="0 0 12 20"><path d="M1.8,1.5 L9.5,9.5 L1.8,17.5" fill="none" stroke="#6C707E" stroke-width="1.8" stroke-linecap="round" stroke-linejoin="round"/></svg>
<div class="sep" style="left:599.0px;width:400.0px;top:1161.3px"></div>
<div class="mt" style="left:648.0px;top:1170.8px;height:50.4px;line-height:50.4px">Bookmarks</div>
<svg class="ic" style="left:972.2px;top:1187.8px" width="12" height="20" viewBox="0 0 12 20"><path d="M1.8,1.5 L9.5,9.5 L1.8,17.5" fill="none" stroke="#6C707E" stroke-width="1.8" stroke-linecap="round" stroke-linejoin="round"/></svg>
<div class="sep" style="left:599.0px;width:400.0px;top:1228.7px"></div>
<div class="mt" style="left:648.0px;top:1238.2px;height:50.4px;line-height:50.4px">Reformat Code</div>
<div class="msc" style="right:607.0px;top:1238.2px;height:50.4px;color:#6C707E"><svg width="25" height="20" viewBox="0 0 25 20" style="margin-right:1px"><path d="M1,2.8 H8 L16,17.2 H24 M15,2.8 H24" fill="none" stroke="#6C707E" stroke-width="1.8"/></svg><svg width="20" height="20" viewBox="0 0 20 20" style="margin-right:1px"><path d="M7,7 H13 V13 H7 Z M7,7 V4.8 A2.6,2.6 0 1 0 4.8,7 H7 M13,7 V4.8 A2.6,2.6 0 1 1 15.2,7 H13 M7,13 V15.2 A2.6,2.6 0 1 1 4.8,13 H7 M13,13 V15.2 A2.6,2.6 0 1 0 15.2,13 H13" fill="none" stroke="#6C707E" stroke-width="1.7"/></svg><span>L</span></div>
<svg class="ic" style="left:609.0px;top:1252.4px" width="26" height="21" viewBox="0 0 26 21"><path d="M2,6 L7,9.9 L2,13.8 Z" fill="#2A6CF0"/><path d="M2,1.8 H24.6 M10,8.1 H24.6 M10,13.5 H24.6 M2,18.8 H24.6" stroke="#555A69" stroke-width="1.7"/></svg>
<div class="mt" style="left:648.0px;top:1288.6px;height:50.4px;line-height:50.4px">Optimize Imports</div>
<div class="msc" style="right:607.0px;top:1288.6px;height:50.4px;color:#6C707E"><svg width="18" height="22" viewBox="0 0 18 22" style="margin-right:3px"><path d="M2,9 L9,2 L16,9" fill="none" stroke="#6C707E" stroke-width="1.8"/></svg><svg width="25" height="20" viewBox="0 0 25 20" style="margin-right:1px"><path d="M1,2.8 H8 L16,17.2 H24 M15,2.8 H24" fill="none" stroke="#6C707E" stroke-width="1.8"/></svg><span>O</span></div>
<div class="mt" style="left:648.0px;top:1339.0px;height:50.4px;line-height:50.4px">Delete<span class="dots">...</span></div>
<div class="msc" style="right:607.0px;top:1339.0px;height:50.4px;color:#6C707E"><svg width="28" height="20" viewBox="0 0 28 20"><path d="M1.5,1.8 H19 L26.5,10 L19,18.2 H1.5 Z M6.5,5 L14.5,15 M14.5,5 L6.5,15" fill="none" stroke="#6C707E" stroke-width="1.7" stroke-linejoin="round"/></svg></div>
<div class="mt" style="left:648.0px;top:1389.4px;height:50.4px;line-height:50.4px">Override File Type</div>
<div class="sep" style="left:599.0px;width:400.0px;top:1447.3px"></div>
<div class="mt" style="left:648.0px;top:1456.8px;height:50.4px;line-height:50.4px">Open in Right Split</div>
<div class="msc" style="right:607.0px;top:1456.8px;height:50.4px;color:#6C707E"><svg width="21" height="22" viewBox="0 0 21 22" style="margin-right:2px"><path d="M10.5,1.8 L19.5,10.8 H14.5 V19.8 H6.5 V10.8 H1.5 Z" fill="none" stroke="#6C707E" stroke-width="1.7" stroke-linejoin="round"/></svg><svg width="22" height="22" viewBox="0 0 22 22"><path d="M19.5,3 V13.5 H3 M7.5,9 L2.5,13.5 L7.5,18" fill="none" stroke="#6C707E" stroke-width="1.7"/></svg></div>
<svg class="ic" style="left:609.0px;top:1469.5px" width="25" height="25" viewBox="0 0 25 25"><rect x="2.85" y="1.35" width="21" height="21.3" rx="3.5" fill="#FFF" stroke="#555A69" stroke-width="1.7"/><path d="M13.35,1.35 V22.65" stroke="#555A69" stroke-width="1.7"/></svg>
<div class="menu" style="left:1017px;top:1091px;width:567px;height:600px"></div>
<div class="mt" style="left:1053.5px;top:1103.8px;height:50.4px;line-height:50.4px">Rename<span class="dots">...</span></div>
<div class="msc" style="right:44.0px;top:1103.8px;height:50.4px;color:#6C707E"><svg width="21" height="22" viewBox="0 0 21 22" style="margin-right:2px"><path d="M10.5,1.8 L19.5,10.8 H14.5 V19.8 H6.5 V10.8 H1.5 Z" fill="none" stroke="#6C707E" stroke-width="1.7" stroke-linejoin="round"/></svg><span>F6</span></div>
<div class="mt" style="left:1053.5px;top:1154.2px;height:50.4px;line-height:50.4px">Rename File<span class="dots">...</span></div>
<div class="msc" style="right:44.0px;top:1154.2px;height:50.4px;color:#6C707E"><svg width="21" height="22" viewBox="0 0 21 22" style="margin-right:2px"><path d="M10.5,1.8 L19.5,10.8 H14.5 V19.8 H6.5 V10.8 H1.5 Z" fill="none" stroke="#6C707E" stroke-width="1.7" stroke-linejoin="round"/></svg><span>F5</span></div>
<div class="mt" style="left:1053.5px;top:1204.6px;height:50.4px;line-height:50.4px">Change Signature<span class="dots">...</span></div>
<div class="msc" style="right:44.0px;top:1204.6px;height:50.4px;color:#6C707E"><svg width="20" height="20" viewBox="0 0 20 20" style="margin-right:1px"><path d="M7,7 H13 V13 H7 Z M7,7 V4.8 A2.6,2.6 0 1 0 4.8,7 H7 M13,7 V4.8 A2.6,2.6 0 1 1 15.2,7 H13 M7,13 V15.2 A2.6,2.6 0 1 1 4.8,13 H7 M13,13 V15.2 A2.6,2.6 0 1 0 15.2,13 H13" fill="none" stroke="#6C707E" stroke-width="1.7"/></svg><span>F6</span></div>
<div class="sep" style="left:1040.0px;width:522.0px;top:1262.5px"></div>
<div class="mt" style="left:1053.5px;top:1272.0px;height:50.4px;line-height:50.4px">Extract Interface<span class="dots">...</span></div>
<div class="mt" style="left:1053.5px;top:1322.4px;height:50.4px;line-height:50.4px">Extract Superclass<span class="dots">...</span></div>
<div class="mt" style="left:1053.5px;top:1372.8px;height:50.4px;line-height:50.4px">Inline<span class="dots">...</span></div>
<div class="msc" style="right:44.0px;top:1372.8px;height:50.4px;color:#6C707E"><svg width="25" height="20" viewBox="0 0 25 20" style="margin-right:1px"><path d="M1,2.8 H8 L16,17.2 H24 M15,2.8 H24" fill="none" stroke="#6C707E" stroke-width="1.8"/></svg><svg width="20" height="20" viewBox="0 0 20 20" style="margin-right:1px"><path d="M7,7 H13 V13 H7 Z M7,7 V4.8 A2.6,2.6 0 1 0 4.8,7 H7 M13,7 V4.8 A2.6,2.6 0 1 1 15.2,7 H13 M7,13 V15.2 A2.6,2.6 0 1 1 4.8,13 H7 M13,13 V15.2 A2.6,2.6 0 1 0 15.2,13 H13" fill="none" stroke="#6C707E" stroke-width="1.7"/></svg><span>N</span></div>
<div class="sep" style="left:1040.0px;width:522.0px;top:1430.7px"></div>
<div class="msel" style="left:1033.5px;width:535.5px;top:1441.6px;height:46px"></div>
<div class="mt" style="left:1053.5px;top:1440.2px;height:50.4px;line-height:50.4px">Move<span class="dots">...</span></div>
<div class="msc" style="right:44.0px;top:1440.2px;height:50.4px;color:#000">F6</div>
</body></html>
